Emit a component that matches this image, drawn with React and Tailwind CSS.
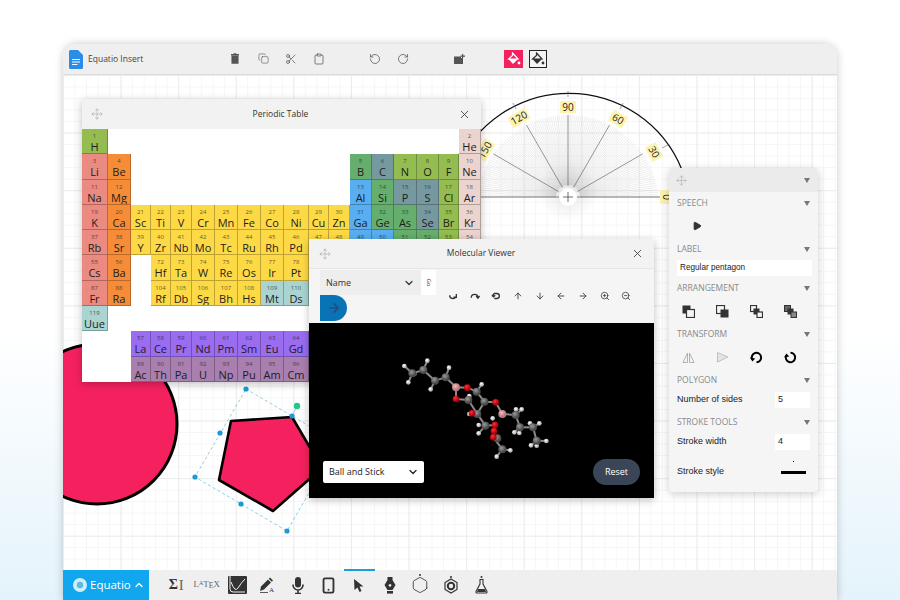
import { Copy, Scissors, Clipboard, RotateCcw, RotateCw, Move, X, ChevronDown, ChevronUp, ArrowUp, ArrowDown, ArrowLeft, ArrowRight, ZoomIn, ZoomOut, Smartphone, Hexagon, Play } from "lucide-react"

const CELL_COLORS = {
  lime: "bg-[#94bc50]",
  salmon: "bg-[#ea8a80]",
  orange: "bg-[#f78c38]",
  yellow: "bg-[#fdda45]",
  green: "bg-[#66ae6e]",
  slate: "bg-[#76989f]",
  blue: "bg-[#58aef0]",
  pink: "bg-[#ebd3ce]",
  teal: "bg-[#a9d4d2]",
  purple: "bg-[#9a6cf0]",
  mauve: "bg-[#a87fae]",
}

// [number, symbol, colour, column, row] - symbols behind the viewer window are left out
const ELEMENTS = [
  [1, "H", "lime", 1, 1], [2, "He", "pink", 18, 1],
  [3, "Li", "salmon", 1, 2], [4, "Be", "orange", 2, 2], [5, "B", "green", 13, 2], [6, "C", "slate", 14, 2], [7, "N", "lime", 15, 2], [8, "O", "lime", 16, 2], [9, "F", "lime", 17, 2], [10, "Ne", "pink", 18, 2],
  [11, "Na", "salmon", 1, 3], [12, "Mg", "orange", 2, 3], [13, "Al", "blue", 13, 3], [14, "Si", "green", 14, 3], [15, "P", "slate", 15, 3], [16, "S", "slate", 16, 3], [17, "Cl", "lime", 17, 3], [18, "Ar", "pink", 18, 3],
  [19, "K", "salmon", 1, 4], [20, "Ca", "orange", 2, 4], [21, "Sc", "yellow", 3, 4], [22, "Ti", "yellow", 4, 4], [23, "V", "yellow", 5, 4], [24, "Cr", "yellow", 6, 4], [25, "Mn", "yellow", 7, 4], [26, "Fe", "yellow", 8, 4], [27, "Co", "yellow", 9, 4], [28, "Ni", "yellow", 10, 4], [29, "Cu", "yellow", 11, 4], [30, "Zn", "yellow", 12, 4], [31, "Ga", "blue", 13, 4], [32, "Ge", "green", 14, 4], [33, "As", "green", 15, 4], [34, "Se", "slate", 16, 4], [35, "Br", "lime", 17, 4], [36, "Kr", "pink", 18, 4],
  [37, "Rb", "salmon", 1, 5], [38, "Sr", "orange", 2, 5], [39, "Y", "yellow", 3, 5], [40, "Zr", "yellow", 4, 5], [41, "Nb", "yellow", 5, 5], [42, "Mo", "yellow", 6, 5], [43, "Tc", "yellow", 7, 5], [44, "Ru", "yellow", 8, 5], [45, "Rh", "yellow", 9, 5], [46, "Pd", "yellow", 10, 5], [47, "", "yellow", 11, 5], [48, "", "yellow", 12, 5], [49, "", "blue", 13, 5], [50, "", "blue", 14, 5], [51, "", "green", 15, 5], [52, "", "green", 16, 5], [53, "", "lime", 17, 5], [54, "", "pink", 18, 5],
  [55, "Cs", "salmon", 1, 6], [56, "Ba", "orange", 2, 6], [72, "Hf", "yellow", 4, 6], [73, "Ta", "yellow", 5, 6], [74, "W", "yellow", 6, 6], [75, "Re", "yellow", 7, 6], [76, "Os", "yellow", 8, 6], [77, "Ir", "yellow", 9, 6], [78, "Pt", "yellow", 10, 6],
  [87, "Fr", "salmon", 1, 7], [88, "Ra", "orange", 2, 7], [104, "Rf", "yellow", 4, 7], [105, "Db", "yellow", 5, 7], [106, "Sg", "yellow", 6, 7], [107, "Bh", "yellow", 7, 7], [108, "Hs", "yellow", 8, 7], [109, "Mt", "teal", 9, 7], [110, "Ds", "teal", 10, 7],
  [119, "Uue", "teal", 1, 8],
  [57, "La", "purple", 3, 9], [58, "Ce", "purple", 4, 9], [59, "Pr", "purple", 5, 9], [60, "Nd", "purple", 6, 9], [61, "Pm", "purple", 7, 9], [62, "Sm", "purple", 8, 9], [63, "Eu", "purple", 9, 9], [64, "Gd", "purple", 10, 9],
  [89, "Ac", "mauve", 3, 10], [90, "Th", "mauve", 4, 10], [91, "Pa", "mauve", 5, 10], [92, "U", "mauve", 6, 10], [93, "Np", "mauve", 7, 10], [94, "Pu", "mauve", 8, 10], [95, "Am", "mauve", 9, 10], [96, "Cm", "mauve", 10, 10],
]

const ATOMS = {
  H: [[73, 78], [85, 127], [103, 102], [142, 62], [152, 148], [207, 83], [305, 133], [268, 168], [268, 222], [296, 255], [296, 280], [338, 235], [350, 350], [391, 331], [425, 208], [408, 208], [403, 277], [418, 279], [478, 250], [450, 250], [453, 316], [470, 317], [499, 303]],
  C: [[97, 100], [130, 90], [165, 122], [197, 112], [290, 155], [313, 185], [265, 180], [292, 222], [316, 257], [407, 225], [420, 262], [459, 262], [470, 302], [367, 328], [352, 295]],
  B: [[228, 142], [367, 222]],
  O: [[262, 143], [228, 177], [347, 187], [276, 220], [345, 255], [342, 273], [340, 292]],
}

const BONDS = [
  [97, 100, 130, 90], [130, 90, 165, 122], [165, 122, 197, 112], [197, 112, 228, 142], [228, 142, 262, 143], [228, 142, 228, 177], [228, 177, 265, 180], [262, 143, 290, 155], [290, 155, 313, 185], [313, 185, 292, 222], [292, 222, 265, 180], [313, 185, 347, 187], [347, 187, 367, 222], [292, 222, 316, 257], [316, 257, 345, 255], [367, 222, 407, 225], [407, 225, 420, 262], [420, 262, 459, 262], [459, 262, 470, 302], [345, 255, 340, 292], [340, 292, 367, 328],
  [97, 100, 73, 78], [97, 100, 85, 127], [130, 90, 142, 62], [165, 122, 152, 148], [197, 112, 207, 83], [290, 155, 305, 133], [470, 302, 499, 303], [470, 302, 453, 316], [367, 328, 391, 331], [367, 328, 350, 350], [407, 225, 425, 208], [420, 262, 403, 277], [459, 262, 478, 250], [316, 257, 296, 280],
]

const FILL = { H: "url(#atomH)", C: "url(#atomC)", B: "url(#atomB)", O: "url(#atomO)" }
const RADIUS = { H: 7, C: 12, B: 12, O: 10 }

function Element({ el }) {
  const [num, sym, color, col, row] = el
  return (
    <div
      style={{ gridColumnStart: col, gridRowStart: row }}
      className={`${CELL_COLORS[color]} flex flex-col items-center pt-[4px] border-r border-b border-black/25 text-[#1d1d1d] overflow-hidden`}
    >
      <span className="text-[6px] leading-[7px] opacity-70">{num}</span>
      {sym && <span className="text-[11px] leading-[13px]">{sym}</span>}
    </div>
  )
}

function PeriodicTable() {
  return (
    <div className="absolute left-[19px] top-[24px] w-[399px] bg-white shadow-[0_2px_8px_rgba(0,0,0,0.25)]">
      <div className="h-[30px] bg-[#f2f2f2] flex items-center justify-between pl-[9px] pr-[10px] text-[#333]">
        <Move size={12} strokeWidth={1} className="text-[#999]" />
        <span className="text-[8.5px]">Periodic Table</span>
        <X size={13} strokeWidth={1.5} className="text-[#333]" />
      </div>
      <div className="grid grid-cols-[26px_23px_20px_20px_21px_23px_23px_23px_23px_25px_20px_21px_22px_22px_23px_22px_20px_22px] auto-rows-[25.3px]">
        {ELEMENTS.map((el) => <Element key={el[0]} el={el} />)}
      </div>
    </div>
  )
}

function Protractor() {
  const cx = 568, cy = 197
  // fan lines run from the base point to a circle centred a bit lower
  const rayPoint = (deg, from) => {
    const a = (deg * Math.PI) / 180
    const dx = Math.cos(a), dy = -Math.sin(a)
    const d = 9
    const b = dy * -d
    const t = -b + Math.sqrt(b * b - (d * d - 91 * 91))
    return [cx + dx * t, cy + dy * t, cx + dx * from, cy + dy * from]
  }
  const lines = []
  for (let deg = 0; deg <= 180; deg += 1.5) lines.push(deg)
  const labels = [
    ["90", 568, 107, 0, 16],
    ["120", 519, 118, -30, 20],
    ["60", 618, 119, 30, 16],
    ["30", 654, 152, 60, 16],
    ["150", 485, 150, -60, 20],
    ["0", 666, 197, 90, 14],
  ]
  return (
    <g>
      <path d="M 456 170 A 121.6 121.6 0 0 1 682 170" fill="none" stroke="#111" strokeWidth="1.3" />
      {lines.map((deg) => {
        const [x, y, x0, y0] = rayPoint(deg, 12)
        return <line key={deg} x1={x0} y1={y0} x2={x} y2={y} stroke="#c4c4c4" strokeWidth="0.3" />
      })}
      <circle cx={cx} cy={cy - 6} r="30" fill="url(#fanShade)" />
      {[30, 60, 90, 120, 150].map((deg) => {
        const [x, y, x0, y0] = rayPoint(deg, 11)
        return <line key={deg} x1={x0} y1={y0} x2={x} y2={y} stroke="#555" strokeWidth="0.6" />
      })}
      <line x1="470" y1={cy} x2="660" y2={cy} stroke="#444" strokeWidth="0.7" />
      <circle cx={cx} cy={cy} r="9" fill="#fff" />
      <path d={`M${cx - 5} ${cy}H${cx + 5}M${cx} ${cy - 5}V${cy + 5}`} stroke="#333" strokeWidth="0.7" />
      <path d="M568 91V97M513 103l3 6M623 103l-3 6M668 145l-6 3" stroke="#666" strokeWidth="0.6" />
      {labels.map(([t, x, y, r, w]) => (
        <g key={t} transform={`rotate(${r} ${x} ${y})`}>
          <rect x={x - w / 2} y={y - 6} width={w} height="12" fill="#fdf3b0" />
          <text x={x} y={y + 3.5} textAnchor="middle" fontSize="10" fill="#222" fontFamily="Open Sans, sans-serif">{t}</text>
        </g>
      ))}
    </g>
  )
}

function CanvasDrawing() {
  const handles = [[246, 389], [195, 477], [287, 531], [220, 433], [241, 504], [292, 416]]
  return (
    <svg className="absolute inset-0" width="774" height="495" viewBox="63 75 774 495">
      <defs>
        <radialGradient id="fanShade">
          <stop offset="0%" stopColor="#aaa" stopOpacity="0.3" />
          <stop offset="100%" stopColor="#aaa" stopOpacity="0" />
        </radialGradient>
      </defs>
      <circle cx="97" cy="424" r="80" fill="#f5215e" stroke="#000" strokeWidth="3" />
      <polygon points="231,421 292,417 322,468 273,511 219,480" fill="#f5215e" stroke="#000" strokeWidth="2.6" strokeLinejoin="round" />
      <polygon points="246,389 338,443 287,531 195,477" fill="none" stroke="#6cc3e6" strokeWidth="0.8" strokeDasharray="3 2.5" />
      <line x1="292" y1="416" x2="297" y2="406" stroke="#6cc3e6" strokeWidth="0.8" />
      {handles.map(([x, y]) => <circle key={`${x}-${y}`} cx={x} cy={y} r="2.6" fill="#1b9ad6" />)}
      <circle cx="297" cy="406" r="3.2" fill="#27c48c" />
      <Protractor />
    </svg>
  )
}

function Molecule() {
  return (
    <svg className="absolute left-[71px] top-[17px]" width="190" height="130" viewBox="0 0 570 390">
      <defs>
        <radialGradient id="atomH" cx="40%" cy="35%"><stop offset="0%" stopColor="#fff" /><stop offset="100%" stopColor="#b5b5b5" /></radialGradient>
        <radialGradient id="atomC" cx="40%" cy="35%"><stop offset="0%" stopColor="#9a9a9a" /><stop offset="100%" stopColor="#4a4a4a" /></radialGradient>
        <radialGradient id="atomB" cx="40%" cy="35%"><stop offset="0%" stopColor="#f5bcc0" /><stop offset="100%" stopColor="#b8777d" /></radialGradient>
        <radialGradient id="atomO" cx="40%" cy="35%"><stop offset="0%" stopColor="#ff3030" /><stop offset="100%" stopColor="#b00010" /></radialGradient>
      </defs>
      {BONDS.map(([a, b, c, d], i) => <line key={i} x1={a} y1={b} x2={c} y2={d} stroke="#8a8a8a" strokeWidth="6" />)}
      {Object.keys(ATOMS).map((kind) =>
        ATOMS[kind].map(([x, y]) => <circle key={`${kind}${x}${y}`} cx={x} cy={y} r={RADIUS[kind]} fill={FILL[kind]} />)
      )}
    </svg>
  )
}

function SmallArc({ d }) {
  return (
    <svg width="10" height="10" viewBox="0 0 12 12" fill="none" stroke="#333" strokeWidth="1.6">
      <path d={d} />
    </svg>
  )
}

function MolecularViewer() {
  return (
    <div className="absolute left-[246px] top-[164px] w-[345px] h-[259px] bg-[#f5f5f5] flex flex-col shadow-[0_2px_8px_rgba(0,0,0,0.25)]">
      <div className="h-[30px] shrink-0 bg-[#f2f2f2] border-b border-[#e6e6e6] flex items-center justify-between px-[10px] text-[#333]">
        <Move size={12} strokeWidth={1} className="text-[#999]" />
        <span className="text-[8.5px]">Molecular Viewer</span>
        <X size={13} strokeWidth={1.5} />
      </div>
      <div className="h-[54px] shrink-0 flex items-center">
        <div className="ml-[11px] w-[116px] h-[52px] flex flex-col">
          <div className="flex h-[25px]">
            <div className="w-[101px] bg-[#eeeeee] flex items-center justify-between pl-[6px] pr-[6px] text-[9px] text-[#333]">
              Name
              <ChevronDown size={12} strokeWidth={2.4} />
            </div>
            <div className="w-[15px] bg-white flex items-center justify-center text-[6px] text-[#333]">
              <span className="rotate-90">Go</span>
            </div>
          </div>
          <div className="w-[27px] h-[26px] bg-[#0873b5] rounded-r-[13px] flex items-center justify-center">
            <ArrowRight size={14} strokeWidth={2.8} className="text-[#1f4f80]" />
          </div>
        </div>
        <div className="ml-[6px] flex items-center text-[#333]">
          {[
            <SmallArc key="a" d="M2 5a4 4 0 0 0 7.5 2M10 3.5V7.5H6.5" />,
            <SmallArc key="b" d="M1.5 8a4 4 0 0 1 8 0M7.5 6l2 2.5 2-2.5" />,
            <SmallArc key="c" d="M4 9H7a3 3 0 0 0 0-6H4a3 3 0 0 0-1 4M1 5l2 2 2-2" />,
            <ArrowUp key="d" size={10} strokeWidth={2} />,
            <ArrowDown key="e" size={10} strokeWidth={2} />,
            <ArrowLeft key="f" size={10} strokeWidth={2} />,
            <ArrowRight key="g" size={10} strokeWidth={2} />,
            <ZoomIn key="h" size={10} strokeWidth={1.8} />,
            <ZoomOut key="i" size={10} strokeWidth={1.8} />,
          ].map((icon, i) => (
            <div key={i} className="w-[21.7px] flex justify-center">{icon}</div>
          ))}
        </div>
      </div>
      <div className="relative flex-1 bg-black flex items-end justify-between pl-[14px] pr-[14px] pb-[13px]">
        <Molecule />
        <div className="relative w-[101px] h-[22px] mb-[2px] bg-white rounded-[2px] flex items-center justify-between pl-[6px] pr-[5px] text-[9px] text-[#222]">
          Ball and Stick
          <ChevronDown size={12} strokeWidth={2.5} />
        </div>
        <div className="relative w-[47px] h-[26px] rounded-full bg-[#3a4558] text-white text-[9px] flex items-center justify-center">Reset</div>
      </div>
    </div>
  )
}

function SectionHead({ title }) {
  return (
    <div className="h-[22px] flex items-center justify-between text-[8.5px] text-[#8a8a8a]">
      {title}
      <Caret />
    </div>
  )
}

function Caret() {
  return <span className="w-0 h-0 border-x-[3.5px] border-x-transparent border-t-[5px] border-t-[#777]" />
}

function Squares({ front }) {
  return (
    <svg width="13" height="13" viewBox="0 0 13 13">
      {front === "white" && <><rect x="0.5" y="0.5" width="8" height="8" fill="#333" /><rect x="4.5" y="4.5" width="8" height="8" fill="#f5f5f5" stroke="#333" strokeWidth="1.2" /></>}
      {front === "black" && <><rect x="0.5" y="0.5" width="8" height="8" fill="#f5f5f5" stroke="#333" strokeWidth="1.2" /><rect x="4.5" y="4.5" width="8" height="8" fill="#333" /></>}
      {front === "mid" && <><rect x="0.5" y="0.5" width="6" height="6" fill="#f5f5f5" stroke="#333" strokeWidth="1.2" /><rect x="3.5" y="3.5" width="6" height="6" fill="#333" /><rect x="7" y="7" width="5.5" height="5.5" fill="#f5f5f5" stroke="#333" strokeWidth="1.2" /></>}
      {front === "back" && <><rect x="0.5" y="0.5" width="6" height="6" fill="#666" stroke="#333" strokeWidth="1" /><rect x="3.5" y="3.5" width="6" height="6" fill="#333" /><rect x="7" y="7" width="5.5" height="5.5" fill="#888" stroke="#333" strokeWidth="1" /></>}
    </svg>
  )
}

function IconRow({ children }) {
  return <div className="h-[24px] -ml-[6px] flex items-center">{children.map((c, i) => <div key={i} className="w-[34px] flex justify-center">{c}</div>)}</div>
}

function FieldRow({ label, value, className }) {
  return (
    <div className={`flex items-center justify-between text-[9px] text-[#222] ${className}`}>
      {label}
      <div className="w-[35px] h-[16px] bg-white flex items-center pl-[3px]">{value}</div>
    </div>
  )
}

function RotateThick({ flip }) {
  return (
    <svg width="13" height="13" viewBox="0 0 13 13" fill="none" className={flip ? "-scale-x-100 rotate-180" : ""}>
      <path d="M2.2 8.5A4.7 4.7 0 1 1 6.5 11.2" stroke="#000" strokeWidth="2" />
      <path d="M0 6.5L2.4 10.5L5.2 7.5Z" fill="#000" />
    </svg>
  )
}

function PropertiesPanel() {
  return (
    <div className="absolute left-[606px] top-[93px] w-[149px] h-[324px] rounded-[4px] bg-[#f5f5f5] shadow-[0_2px_10px_rgba(0,0,0,0.2)] font-['Liberation_Sans',sans-serif]">
      <div className="h-[24px] rounded-t-[4px] bg-[#ebebeb] flex items-center justify-between pl-[7px] pr-[8px]">
        <Move size={11} strokeWidth={1} className="text-[#999]" />
        <Caret />
      </div>
      <div className="pl-[8px] pr-[8px] font-['Open_Sans',sans-serif]">
        <SectionHead title="SPEECH" />
        <div className="h-[24px] flex items-center pl-[15px]">
          <Play size={10} fill="#333" stroke="#333" />
        </div>
        <SectionHead title="LABEL" />
        <div className="h-[16px] -mr-[2px] bg-white flex items-center pl-[3px] text-[8.2px] text-[#222] font-['Liberation_Sans',sans-serif]">Regular pentagon</div>
        <div className="mt-[1px]"><SectionHead title="ARRANGEMENT" /></div>
        <IconRow>
          <Squares front="white" />
          <Squares front="black" />
          <Squares front="mid" />
          <Squares front="back" />
        </IconRow>
        <SectionHead title="TRANSFORM" />
        <IconRow>
          <svg width="13" height="13" viewBox="0 0 13 13" fill="none" stroke="#aaa" strokeWidth="0.9"><path d="M5.5 2L1 11.5H5.5ZM7.5 2L12 11.5H7.5Z" /></svg>
          <svg width="13" height="13" viewBox="0 0 13 13" fill="#e4e4e4" stroke="#bbb" strokeWidth="0.9"><path d="M1.5 1.5L12 6L1.5 11Z" /></svg>
          <RotateThick />
          <RotateThick flip />
        </IconRow>
        <SectionHead title="POLYGON" />
        <div className="font-['Liberation_Sans',sans-serif]">
          <FieldRow label="Number of sides" value="5" className="mt-[1px]" />
        </div>
        <div className="mt-[3px]"><SectionHead title="STROKE TOOLS" /></div>
        <div className="font-['Liberation_Sans',sans-serif]">
          <FieldRow label="Stroke width" value="4" className="mt-[1px]" />
          <div className="mt-[10px] h-[24px] flex items-center justify-between pr-[4px] text-[9px] text-[#222]">
            Stroke style
            <div className="relative w-[25px] h-[3px] bg-black">
              <span className="absolute left-[12px] -top-[10px] w-[1px] h-[1px] bg-black" />
            </div>
          </div>
        </div>
      </div>
    </div>
  )
}

function Bucket({ color, drop }) {
  return (
    <svg width="14" height="14" viewBox="0 0 14 14">
      <path d="M5.5 1L11 7H1.5L5.5 3.5Z" fill="none" stroke={color} strokeWidth="1.2" />
      <path d="M1.5 7H11L6 12Z" fill={color} />
      <circle cx="12" cy="11" r="1.4" fill={drop} />
    </svg>
  )
}

function TopBar() {
  return (
    <div className="h-[31px] shrink-0 bg-[#efefef] border-b border-[#dcdcdc] flex items-center text-[#555]">
      <svg className="ml-[6px]" width="14" height="19" viewBox="0 0 14 19">
        <path d="M1.5 0H9L14 5V17.5A1.5 1.5 0 0 1 12.5 19H1.5A1.5 1.5 0 0 1 0 17.5V1.5A1.5 1.5 0 0 1 1.5 0Z" fill="#2a8de9" />
        <path d="M3 9.5H11M3 12H11M3 14.5H8.5" stroke="#fff" strokeWidth="1" />
      </svg>
      <span className="ml-[5px] w-[133px] text-[8.5px] text-[#444]">Equatio Insert</span>
      <div className="flex">
        <div className="w-[28px] flex justify-center">
          <svg width="8" height="11" viewBox="0 0 9 12" fill="#555"><path d="M3 0H6V1H9V2.5H0V1H3ZM0.5 3H8.5V12H0.5Z" /></svg>
        </div>
        <div className="w-[28px] flex justify-center"><Copy size={11} strokeWidth={1.3} /></div>
        <div className="w-[28px] flex justify-center"><Scissors size={12} strokeWidth={1.5} /></div>
        <div className="w-[28px] flex justify-center"><Clipboard size={12} strokeWidth={1.5} /></div>
      </div>
      <div className="ml-[28px] flex">
        <div className="w-[28px] flex justify-center"><RotateCcw size={12} strokeWidth={1.5} /></div>
        <div className="w-[28px] flex justify-center"><RotateCw size={12} strokeWidth={1.5} /></div>
      </div>
      <div className="ml-[28px] w-[28px] flex justify-center">
        <svg width="11" height="11" viewBox="0 0 11 11" fill="#555"><path d="M0 2.5H7V4H9V10H0ZM8 0H9.2V1.5H11V2.7H9.2V4H8V2.7H6.5V1.5H8Z" /></svg>
      </div>
      <div className="ml-[31px] w-[19px] h-[18px] bg-[#f5215e] flex items-center justify-center">
        <Bucket color="#fff" drop="#fff" />
      </div>
      <div className="ml-[6px] w-[18px] h-[18px] border border-[#222] bg-[#f4f4f4] flex items-center justify-center">
        <Bucket color="#333" drop="#333" />
      </div>
    </div>
  )
}

function BottomBar() {
  return (
    <div className="h-[30px] shrink-0 bg-[#efefef] flex items-center text-[#333]">
      <div className="w-[86px] h-full bg-[#12a6ef] flex items-center pl-[10px] text-white text-[11.5px] font-medium">
        <svg width="14" height="14" viewBox="0 0 14 14">
          <circle cx="7" cy="7" r="7" fill="#cfeefc" />
          <circle cx="7" cy="7" r="3.2" fill="#5db8e6" />
        </svg>
        <span className="ml-[3px]">Equatio</span>
        <ChevronUp size={12} strokeWidth={2.6} className="ml-[2px]" />
      </div>
      <div className="ml-[12px] flex items-center h-full">
        <BarSlot>
          <span className="font-['Liberation_Serif',serif] font-bold text-[14px] leading-none">Σ</span>
          <span className="ml-[1px] font-['Liberation_Serif',serif] text-[15px] leading-none text-[#666]">I</span>
        </BarSlot>
        <BarSlot>
          <span className="font-['Liberation_Serif',serif] text-[9px] text-[#666] leading-none">L<span className="text-[6px] align-[2px]">A</span>T<span className="text-[8px] align-[-1px]">E</span>X</span>
        </BarSlot>
        <BarSlot>
          <svg width="19" height="18" viewBox="0 0 19 18">
            <rect width="19" height="18" rx="1" fill="#333" />
            <path d="M2 0V13Q2 16 5 16H17M3 6Q7 17 10 12T17 3" fill="none" stroke="#f2f2f2" strokeWidth="1" />
          </svg>
        </BarSlot>
        <BarSlot>
          <svg width="17" height="16" viewBox="0 0 17 16">
            <path d="M1 14L2 9.5L9 2.5L12 5.5L5 12.5Z" fill="#333" />
            <path d="M9.8 1.7L11 .5L14 3.5L12.8 4.7Z" fill="#333" />
            <path d="M1 15.5H9" stroke="#333" strokeWidth="0.8" />
            <text x="10" y="15" fontSize="7" fontFamily="Liberation Serif, serif" fill="#333">A</text>
          </svg>
        </BarSlot>
        <BarSlot>
          <svg width="12" height="17" viewBox="0 0 12 17" fill="none">
            <rect x="3" y="0" width="6" height="10.5" rx="3" fill="#333" />
            <path d="M1 7.5V8A5 5 0 0 0 11 8V7.5M6 13V16.5M3 16.5H9" stroke="#333" strokeWidth="1.6" />
          </svg>
        </BarSlot>
        <BarSlot><Smartphone size={17} strokeWidth={2.6} /></BarSlot>
        <div className="relative h-full w-[30.5px] flex items-center justify-center">
          <span className="absolute -top-[1px] left-0 w-full h-[2px] bg-[#1aa0d8]" />
          <svg width="10" height="13" viewBox="0 0 10 13" fill="#333"><path d="M0 0L9.5 7.5H5.5L7.5 12L5.5 13L3.5 8.5L0.5 11Z" /></svg>
        </div>
        <BarSlot>
          <svg width="12" height="17" viewBox="0 0 12 17">
            <path fillRule="evenodd" d="M3.5 0H8.5V3L11.5 8L8.5 13H3.5L.5 8L3.5 3ZM6 1.5V7A1.4 1.4 0 1 0 6.01 7Z" fill="#333" />
            <rect x="3" y="14" width="6" height="2.6" fill="#333" />
          </svg>
        </BarSlot>
        <BarSlot>
          <div className="relative flex justify-center">
            <Hexagon size={18} strokeWidth={1.1} />
            <span className="absolute -top-[2px] w-[2px] h-[2px] rounded-full bg-[#333]" />
          </div>
        </BarSlot>
        <BarSlot>
          <svg width="16" height="18" viewBox="0 0 16 18" fill="none" stroke="#333">
            <circle cx="8" cy="1" r="1" fill="#333" stroke="none" />
            <path d="M8 3L14 6.5V13.5L8 17L2 13.5V6.5Z" strokeWidth="1.2" />
            <circle cx="8" cy="10" r="3.2" strokeWidth="2" />
          </svg>
        </BarSlot>
        <BarSlot>
          <svg width="13" height="18" viewBox="0 0 13 18" fill="none" stroke="#333">
            <circle cx="6.5" cy="1" r="1" fill="#333" stroke="none" />
            <path d="M4.5 3.5H8.5M5 3.5V8L1 15.5Q.8 17 2 17H11Q12.2 17 12 15.5L8 8V3.5" strokeWidth="1.1" />
            <path d="M3 13H10L11 16H2Z" fill="#333" stroke="none" />
          </svg>
        </BarSlot>
      </div>
    </div>
  )
}

function BarSlot({ children }) {
  return <div className="w-[30.5px] flex items-center justify-center">{children}</div>
}

export default function App() {
  return (
    <div className="h-[600px] w-[900px] overflow-hidden bg-[linear-gradient(#ffffff_0%,#ffffff_55%,#e4f3fb_100%)] pt-[44px] px-[63px] font-['Open_Sans',sans-serif]">
      <div className="h-[556px] w-[774px] rounded-t-[14px] overflow-hidden flex flex-col bg-white shadow-[0_0_8px_rgba(0,0,0,0.22)]">
        <TopBar />
        <div className="relative flex-1 overflow-hidden bg-white bg-[linear-gradient(#ececec_1px,transparent_1px),linear-gradient(90deg,#ececec_1px,transparent_1px),linear-gradient(#f6f6f6_1px,transparent_1px),linear-gradient(90deg,#f6f6f6_1px,transparent_1px)] bg-size-[57.6px_57.6px,57.6px_57.6px,11.52px_11.52px,11.52px_11.52px]">
          <CanvasDrawing />
          <PeriodicTable />
          <MolecularViewer />
          <PropertiesPanel />
        </div>
        <BottomBar />
      </div>
    </div>
  )
}
